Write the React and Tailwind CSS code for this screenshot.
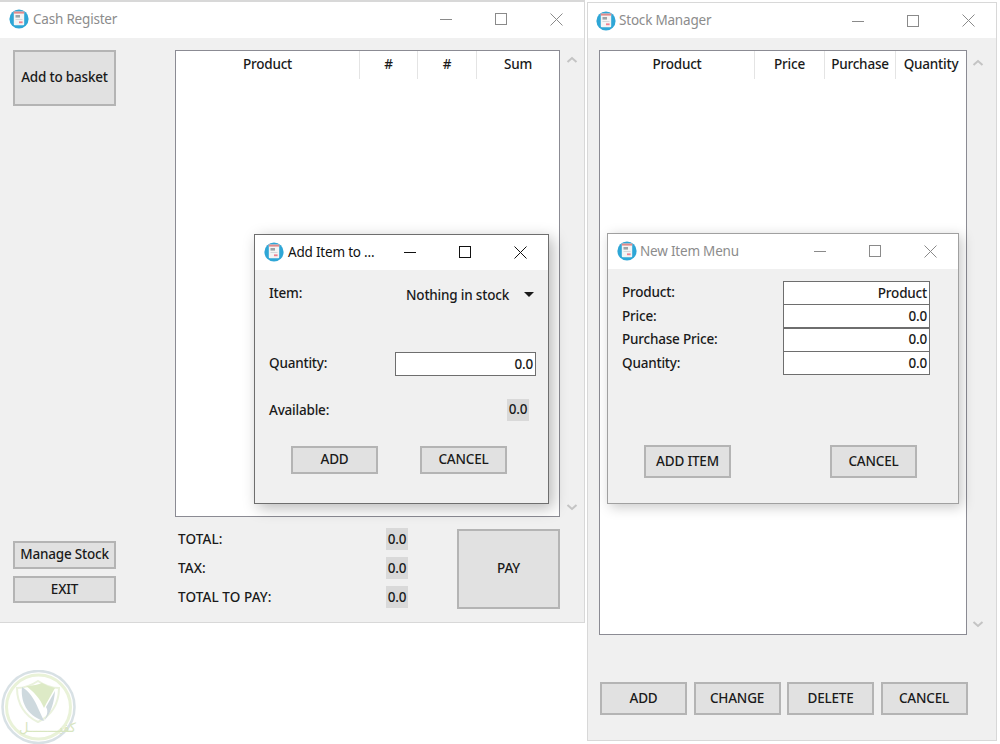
// App.jsx
const font = { fontFamily: '"Noto Sans", "Open Sans", sans-serif' };

const AppIcon = ({ size = 20 }) => (
  <svg width={size} height={size} viewBox="0 0 20 20" className="shrink-0">
    <circle cx="10" cy="10" r="9.6" fill="#2ea6d6" />
    <rect x="4.8" y="2.6" width="10.4" height="13.6" rx="1" fill="#f4f4f4" />
    <rect x="4.8" y="2.6" width="10.4" height="2" fill="#e08a8a" />
    <rect x="6.5" y="6" width="4.5" height="2.6" fill="#9aa4a8" />
    <rect x="6.5" y="10" width="7" height="1" fill="#d4d8da" />
    <rect x="10" y="12.4" width="3.6" height="1.8" fill="#ee7f8e" />
  </svg>
);

const WinControls = ({ active }) => {
  const stroke = active ? '#111' : '#8a8a8a';
  return (
    <div className="flex items-center gap-[43px]">
      <svg width="12" height="12" viewBox="0 0 12 12">
        <path d="M0 6.5h12" stroke={stroke} strokeWidth="1" />
      </svg>
      <svg width="12" height="12" viewBox="0 0 12 12">
        <rect x="0.5" y="0.5" width="11" height="11" fill="none" stroke={stroke} strokeWidth="1" />
      </svg>
      <svg width="13" height="13" viewBox="0 0 13 13">
        <path d="M0.5 0.5l12 12M12.5 0.5l-12 12" stroke={stroke} strokeWidth="1" />
      </svg>
    </div>
  );
};

const Btn = ({ children, className }) => (
  <button className={`flex items-center justify-center bg-[#e1e1e1] border-2 border-[#b4b4b4] text-[13.5px] tracking-[-0.2px] font-medium text-[#1a1a1a] ${className}`}>
    {children}
  </button>
);

const Chip = ({ children }) => (
  <span className="flex items-center justify-center w-[22px] h-[22px] bg-[#d9d9d9] text-[13.5px] tracking-[-0.2px] font-medium text-[#1a1a1a]">{children}</span>
);

const ScrollBar = ({ className }) => (
  <div className={`flex flex-col justify-between items-center w-[12px] ${className}`}>
    <svg width="12" height="8" viewBox="0 0 12 8"><path d="M1.5 6L6 2l4.5 4" fill="none" stroke="#c4c4c4" strokeWidth="2" /></svg>
    <svg width="12" height="8" viewBox="0 0 12 8"><path d="M1.5 2L6 6l4.5-4" fill="none" stroke="#c4c4c4" strokeWidth="2" /></svg>
  </div>
);

const HeaderCell = ({ children, className }) => (
  <div className={`flex items-center justify-center h-[28px] pb-[2px] border-r border-[#e4e4e4] text-[13.5px] tracking-[-0.2px] font-medium text-[#1a1a1a] ${className}`}>
    {children}
  </div>
);

const Logo = () => (
  <div className="absolute left-[1px] top-[670px] w-[75px] h-[74px] opacity-80">
    <svg width="75" height="74" viewBox="0 0 75 74" className="absolute inset-0">
      <circle cx="37.5" cy="37" r="36" fill="#fff" stroke="#cfdadf" strokeWidth="2.5" />
      <circle cx="37.5" cy="37" r="32" fill="none" stroke="#e4efcf" strokeWidth="3" />
      <path d="M16 18C24 18 31 15 37 11C43 15 50 18 58 18C58 34 50 46 37 52C24 46 16 34 16 18z" fill="none" stroke="#e6efd5" strokeWidth="2" />
      <path d="M21 17C28 21 34 30 37 38L43 51C30 47 19 36 21 17z" fill="#c3d0d7" />
      <path d="M25 16C32 16 38 14 41 13C45 15 49 17 54 18C50 25 46 32 43 38C39 28 32 21 25 16z" fill="#d5e6b8" />
      <path d="M54 21C53 33 50 43 43 51C47 44 47 40 45 37C48 32 51 26 54 21z" fill="#c3d0d7" />
    </svg>
    <span dir="rtl" className="absolute left-[18px] top-[49px] text-[13px] leading-[18px] text-[#cfe0b0]" style={{ fontFamily: '"DejaVu Sans", sans-serif' }}>
      كفيــــــــل
    </span>
  </div>
);

const CashRegister = () => (
  <div className="absolute left-0 top-0 w-[585px] h-[623px] flex flex-col border-t-2 border-r border-b border-[#d8d8d8] bg-[#f0f0f0]">
    <div className="flex items-center justify-between h-[36px] pb-[2px] bg-white pl-[9px] pr-[21px]">
      <div className="flex items-center gap-[4px] text-[13.5px] tracking-[-0.2px] text-[#8c8c8c]">
        <AppIcon />
        <span>Cash Register</span>
      </div>
      <WinControls />
    </div>
    <div className="flex-1 flex pl-[13px] pt-[12px]">
      <div className="w-[103px] h-[553px] flex flex-col">
        <Btn className="h-[56px] w-full pb-[1px]">Add to basket</Btn>
        <Btn className="h-[28px] w-full mt-[435px] pb-[1px]">Manage Stock</Btn>
        <Btn className="h-[27px] w-full mt-[7px] pb-[1px]">EXIT</Btn>
      </div>
      <div className="ml-[59px] w-[385px]">
        <div className="h-[467px] border border-[#8b8b93] bg-white flex items-start">
          <HeaderCell className="w-[184px]">Product</HeaderCell>
          <HeaderCell className="w-[58px]">#</HeaderCell>
          <HeaderCell className="w-[59px]">#</HeaderCell>
          <HeaderCell className="flex-1 border-r-0">Sum</HeaderCell>
        </div>
        <div className="flex mt-[12px] pl-[3px]">
          <div className="w-[230px] -mt-[1px] flex flex-col gap-[7px]">
            {['TOTAL:', 'TAX:', 'TOTAL TO PAY:'].map((label) => (
              <div key={label} className="flex items-center justify-between h-[22px] text-[13.5px] font-medium text-[#1a1a1a]">
                <span className="tracking-[0.1px]">{label}</span>
                <Chip>0.0</Chip>
              </div>
            ))}
          </div>
          <Btn className="ml-[49px] w-[103px] h-[80px] pb-[2px]">PAY</Btn>
        </div>
      </div>
      <ScrollBar className="ml-[6px] h-[455px] mt-[6px]" />
    </div>
  </div>
);

const AddItemDialog = () => (
  <div className="absolute left-[254px] top-[234px] w-[295px] h-[270px] flex flex-col border border-[#6e6e6e] bg-[#f0f0f0] shadow-[4px_4px_14px_rgba(0,0,0,0.28)]">
    <div className="flex items-center justify-between h-[35px] pb-[1px] bg-white pl-[9px] pr-[21px]">
      <div className="flex items-center gap-[4px] text-[13.5px] tracking-[-0.2px] text-[#111]">
        <AppIcon />
        <span>Add Item to ...</span>
      </div>
      <WinControls active />
    </div>
    <div className="flex-1 pl-[14px] pr-[12px] text-[13.5px] tracking-[-0.2px] font-medium text-[#1a1a1a]">
      <div className="flex items-center justify-between h-[20px] mt-[15px]">
        <span className="-mt-[4px]">Item:</span>
        <div className="flex items-center">
          <span>Nothing in stock</span>
          <svg width="10" height="6" viewBox="0 0 10 6" className="ml-[15px] mr-[2px]"><path d="M0 0h10L5 5z" fill="#1a1a1a" /></svg>
        </div>
      </div>
      <div className="flex items-center justify-between h-[24px] mt-[47px]">
        <span className="-mt-[2px]">Quantity:</span>
        <div className="w-[141px] h-[24px] border border-[#6e6e6e] bg-white flex items-center justify-end pr-[2px]">0.0</div>
      </div>
      <div className="flex items-center justify-between h-[23px] mt-[22px] pr-[7px]">
        <span className="pt-[2px]">Available:</span>
        <Chip>0.0</Chip>
      </div>
      <div className="flex justify-between pl-[22px] pr-[29px] mt-[25px]">
        <Btn className="w-[87px] h-[28px] pb-[1px]">ADD</Btn>
        <Btn className="w-[87px] h-[28px] pb-[1px]">CANCEL</Btn>
      </div>
    </div>
  </div>
);

const StockManager = () => (
  <div className="absolute left-[587px] top-[2px] w-[410px] h-[739px] flex flex-col border border-[#d8d8d8] bg-[#f0f0f0]">
    <div className="flex items-center justify-between h-[35px] bg-white pl-[8px] pr-[21px]">
      <div className="flex items-center gap-[3px] text-[13.5px] tracking-[-0.2px] text-[#8c8c8c]">
        <AppIcon />
        <span>Stock Manager</span>
      </div>
      <WinControls />
    </div>
    <div className="flex-1 pl-[11px] pt-[12px]">
      <div className="flex">
        <div className="w-[368px] h-[585px] border border-[#8b8b93] bg-white flex items-start">
          <HeaderCell className="w-[155px]">Product</HeaderCell>
          <HeaderCell className="w-[70px]">Price</HeaderCell>
          <HeaderCell className="w-[71px]">Purchase</HeaderCell>
          <HeaderCell className="flex-1 border-r-0">Quantity</HeaderCell>
        </div>
        <ScrollBar className="ml-[5px] h-[569px] mt-[9px]" />
      </div>
      <div className="flex gap-[6.5px] mt-[47px] pl-[1px]">
        {['ADD', 'CHANGE', 'DELETE', 'CANCEL'].map((label) => (
          <Btn key={label} className="w-[87px] h-[33px] pb-[1px]">{label}</Btn>
        ))}
      </div>
    </div>
  </div>
);

const NewItemDialog = () => (
  <div className="absolute left-[607px] top-[233px] w-[352px] h-[271px] flex flex-col border border-[#a0a0a0] bg-[#f0f0f0] shadow-[3px_3px_12px_rgba(0,0,0,0.22)]">
    <div className="flex items-center justify-between h-[35px] pb-[1px] bg-white pl-[9px] pr-[21px]">
      <div className="flex items-center gap-[3px] text-[13.5px] tracking-[-0.2px] text-[#8c8c8c]">
        <AppIcon />
        <span>New Item Menu</span>
      </div>
      <WinControls />
    </div>
    <div className="flex-1 pl-[14px] pt-[12px] text-[13.5px] tracking-[-0.2px] font-medium text-[#1a1a1a]">
      <div className="flex flex-col">
        {[['Product:', 'Product'], ['Price:', '0.0'], ['Purchase Price:', '0.0'], ['Quantity:', '0.0']].map(([label, value], i) => (
          <div key={label} className="flex items-start h-[23.5px]">
            <span className="w-[161px] leading-[22px]">{label}</span>
            <div className={`w-[147px] h-[24px] border border-[#6e6e6e] bg-white flex items-center justify-end pr-[2px] ${i > 0 ? '-mt-[0.5px]' : ''}`}>{value}</div>
          </div>
        ))}
      </div>
      <div className="flex justify-between pl-[22px] pr-[41px] mt-[70px]">
        <Btn className="w-[87px] h-[33px]">ADD ITEM</Btn>
        <Btn className="w-[87px] h-[33px]">CANCEL</Btn>
      </div>
    </div>
  </div>
);

export default function App() {
  return (
    <div className="relative w-[1000px] h-[744px] bg-white overflow-hidden" style={font}>
      <CashRegister />
      <StockManager />
      <AddItemDialog />
      <NewItemDialog />
      <Logo />
    </div>
  );
}
